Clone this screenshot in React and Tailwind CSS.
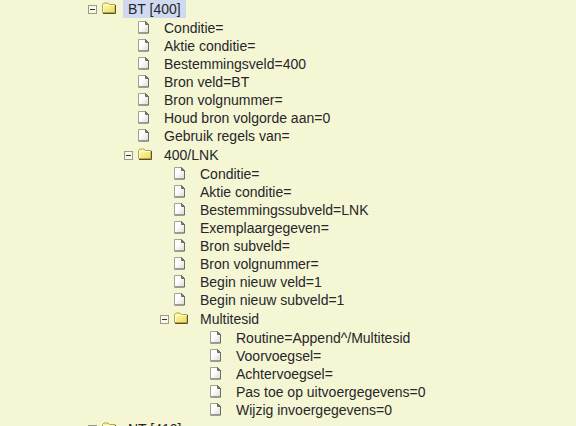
import React, { useState } from 'react';

const tree = [
  {
    label: 'BT [400]',
    children: [
      { label: 'Conditie=' },
      { label: 'Aktie conditie=' },
      { label: 'Bestemmingsveld=400' },
      { label: 'Bron veld=BT' },
      { label: 'Bron volgnummer=' },
      { label: 'Houd bron volgorde aan=0' },
      { label: 'Gebruik regels van=' },
      {
        label: '400/LNK',
        children: [
          { label: 'Conditie=' },
          { label: 'Aktie conditie=' },
          { label: 'Bestemmingssubveld=LNK' },
          { label: 'Exemplaargegeven=' },
          { label: 'Bron subveld=' },
          { label: 'Bron volgnummer=' },
          { label: 'Begin nieuw veld=1' },
          { label: 'Begin nieuw subveld=1' },
          {
            label: 'Multitesid',
            children: [
              { label: 'Routine=Append^/Multitesid' },
              { label: 'Voorvoegsel=' },
              { label: 'Achtervoegsel=' },
              { label: 'Pas toe op uitvoergegevens=0' },
              { label: 'Wijzig invoergegevens=0' },
            ],
          },
        ],
      },
    ],
  },
  { label: 'NT [410]', children: [] },
];

function ToggleIcon({ open }) {
  return (
    <svg width="9" height="9" viewBox="0 0 9 9" shapeRendering="crispEdges">
      <rect x="0.5" y="0.5" width="8" height="8" fill="#fafae6" stroke="#9b9b8c" />
      <path d="M2 4.5h5" stroke="#33332e" />
      {!open && <path d="M4.5 2v5" stroke="#33332e" />}
    </svg>
  );
}

function FolderIcon() {
  return (
    <svg width="16" height="14" viewBox="0 0 16 14">
      <defs>
        <linearGradient id="folder" x1="0" y1="0" x2="1" y2="1">
          <stop offset="0" stopColor="#fffcae" />
          <stop offset="1" stopColor="#eedb62" />
        </linearGradient>
      </defs>
      <path d="M0.5 10.5V2.5L2 1h4l1.5 1.5h5.5v8z" fill="url(#folder)" stroke="#b3a64e" />
      <path d="M1.5 10V3.5h11" fill="none" stroke="#fffcd0" />
      <path d="M1 11.5h12.5V3" fill="none" stroke="#57522a" />
    </svg>
  );
}

function PageIcon() {
  return (
    <svg width="16" height="14" viewBox="0 0 16 14">
      <defs>
        <linearGradient id="page" x1="0" y1="0" x2="1" y2="1">
          <stop offset="0.4" stopColor="#ffffff" />
          <stop offset="1" stopColor="#d8d8d6" />
        </linearGradient>
      </defs>
      <path d="M0.5 0.5h7l3 3v8.5h-10z" fill="url(#page)" stroke="#a2a29a" />
      <path d="M10.5 3.5v8.5H0.5" fill="none" stroke="#6e6e68" />
      <path d="M7.5 0.5v3h3z" fill="#8a8a82" stroke="#55554f" strokeWidth="0.8" />
    </svg>
  );
}

function TreeNode({ node, path, selected, onSelect }) {
  const [open, setOpen] = useState(true);
  const isFolder = Boolean(node.children);
  const isSelected = selected === path;

  return (
    <li>
      <div className={`flex items-center ${isFolder ? 'h-5' : 'h-[18px]'}`}>
        <span className="flex w-[13px] shrink-0">
          {isFolder && (
            <button type="button" aria-label={node.label} aria-expanded={open} onClick={() => setOpen(!open)}>
              <ToggleIcon open={open} />
            </button>
          )}
        </span>
        <span className="w-[22px] shrink-0 pl-px">{isFolder ? <FolderIcon /> : <PageIcon />}</span>
        <button
          type="button"
          onClick={() => onSelect(path)}
          className={`whitespace-nowrap px-[5px] leading-[18px] ${isSelected ? 'bg-[#cfdaf0]' : ''}`}
        >
          {node.label}
        </button>
      </div>

      {isFolder && open && node.children.length > 0 && (
        <ul className="pl-9">
          {node.children.map((child, i) => (
            <TreeNode key={i} node={child} path={`${path}/${i}`} selected={selected} onSelect={onSelect} />
          ))}
        </ul>
      )}
    </li>
  );
}

function App() {
  const [selected, setSelected] = useState('/0');

  return (
    <div className="h-screen overflow-hidden bg-[#f5f6d3] font-['Liberation_Sans',Arial,sans-serif] text-[14px] text-[#26262b]">
      <ul className="-mt-px pl-22">
        {tree.map((node, i) => (
          <TreeNode key={i} node={node} path={`/${i}`} selected={selected} onSelect={setSelected} />
        ))}
      </ul>
    </div>
  );
}

export default App;
